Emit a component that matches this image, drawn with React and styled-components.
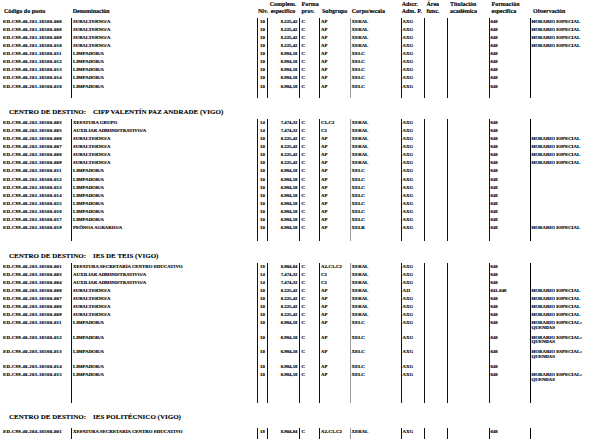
import React from 'react';
import styled, { createGlobalStyle } from 'styled-components';

const GlobalStyle = createGlobalStyle`
  html, body { margin: 0; padding: 0; background: #fff; }
  body {
    font-family: "Liberation Serif", "Times New Roman", serif;
    color: #000;
  }
`;

const COLS = '71px 186px 10px 32px 20px 31px 51px 23px 23px 42px 41px 86px';
const PITCH = 8.1;

const Page = styled.div`
  width: 616px;
  height: 439px;
  overflow: hidden;
  display: flex;
  flex-direction: column;
  background: #fff;
`;

const HeaderGrid = styled.div`
  display: grid;
  grid-template-columns: ${COLS};
  padding-top: 1px;
  font-size: 6px;
  font-weight: 700;
  line-height: 7px;
  -webkit-text-stroke: 0.12px #000;
`;

const HeaderCell = styled.div`
  display: flex;
  flex-direction: column;
  padding-left: ${(p) => p.$pad || 0}px;
  text-align: ${(p) => p.$align || 'left'};
  white-space: nowrap;
`;

const HeaderLine = styled.span`
  display: block;
  height: 7px;
`;

const HeaderRule = styled.div`
  height: 1px;
  margin: 0 4px 0 3px;
  background: #111;
`;

const Section = styled.div`
  display: flex;
  flex-direction: column;
  margin-top: ${(p) => p.$top || 0}px;
`;

const Row = styled.div`
  display: grid;
  grid-template-columns: ${COLS};
  min-height: ${(p) => p.$h || PITCH}px;
  font-size: 4.8px;
  font-weight: 700;
  line-height: 4.8px;
  -webkit-text-stroke: 0.15px #000;
`;

const lineStyles = {
  none: 'border-left: 0;',
  solid: 'border-left: 1px solid #111;',
  gray: 'border-left: 1.5px solid #9c9c9c;',
  heavy: 'border-left: 1.5px solid #000;',
};

const Cell = styled.div`
  box-sizing: border-box;
  ${(p) => lineStyles[p.$line || 'solid']}
  padding-top: 1.75px;
  padding-bottom: ${(p) => (p.$double ? 3.2 : 0)}px;
  padding-left: ${(p) => p.$pad || 0}px;
  padding-right: ${(p) => p.$padR || 0}px;
  text-align: ${(p) => p.$align || 'left'};
  letter-spacing: ${(p) => p.$ls || 0}px;
  white-space: nowrap;
`;

const Heading = styled.div`
  display: flex;
  align-items: center;
  margin: 10.3px 0 ${(p) => p.$after || 2}px 9px;
  height: 9px;
  font-size: 7px;
  line-height: 9px;
  font-weight: 700;
  white-space: nowrap;
  -webkit-text-stroke: 0.1px #000;
`;

const HeadingLabel = styled.span`
  width: 84px;
`;

const colSpec = [
  { line: 'none', pad: 3, ls: 0.3 },
  { line: 'solid', pad: 1 },
  { line: 'solid', align: 'center' },
  { line: 'solid', align: 'right', padR: 1.5 },
  { line: 'solid', pad: 1.5 },
  { line: 'solid', pad: 1 },
  { line: 'gray', pad: 0.5 },
  { line: 'solid', pad: 0.5 },
  { line: 'solid', pad: 0.5 },
  { line: 'solid', pad: 0.5 },
  { line: 'solid', pad: 0.5 },
  { line: 'heavy', pad: 0.5 },
];

const headerSpec = [
  { l2: 'Código do posto', pad: 4 },
  { l2: 'Denominación', pad: 1.7 },
  { l2: 'Niv.', pad: 1 },
  { l1: 'Complem.', l2: 'específico', align: 'center' },
  { l1: 'Forma', l2: 'prov.', pad: 2.5 },
  { l2: 'Subgrupo', pad: 3 },
  { l2: 'Corpo/escala', pad: 1.7 },
  { l1: 'Adscr.', l2: 'Adm. P.', pad: 0.7 },
  { l1: 'Área', l2: 'func.', pad: 2.5 },
  { l1: 'Titulación', l2: 'académica', pad: 3 },
  { l1: 'Formación', l2: 'específica', pad: 2.5 },
  { l2: 'Observación', pad: 3 },
];

const HE = 'HORARIO ESPECIAL';
const HEQ = 'HORARIO ESPECIAL:\nQUENDAS';

const sub = (code, obs = HE, adscr = 'AXG', form = '648') => [
  code, 'SUBALTERNO/A', '10', '8.225,42', 'C', 'AP', 'XERAL', adscr, '', '', form, obs,
];
const limp = (code, obs = '', corpo = 'XELC', denom = 'LIMPADOR/A') => [
  code, denom, '10', '6.984,18', 'C', 'AP', corpo, 'AXG', '', '', '648', obs,
];
const other = (code, denom, niv, comp, grp) => [
  code, denom, niv, comp, 'C', grp, 'XERAL', 'AXG', '', '', '648', '',
];

const P1 = 'ED.C99.40.201.16560.';
const P2 = 'ED.C99.40.202.16560.';
const P3 = 'ED.C99.40.203.16560.';
const P4 = 'ED.C99.40.204.16560.';

const sections = [
  {
    spacer: 7,
    rows: [
      sub(P1 + '006'), sub(P1 + '008'), sub(P1 + '009'), sub(P1 + '010'),
      limp(P1 + '011'), limp(P1 + '012'), limp(P1 + '013'), limp(P1 + '014'), limp(P1 + '016'),
    ],
  },
  {
    heading: 'CIFP VALENTÍN PAZ ANDRADE (VIGO)',
    spacer: 9,
    rows: [
      other(P2 + '003', 'XEFATURA GRUPO', '14', '7.474,32', 'C1-C2'),
      other(P2 + '005', 'AUXILIAR ADMINISTRATIVO/A', '14', '7.474,32', 'C2'),
      sub(P2 + '006'), sub(P2 + '007'), sub(P2 + '008'), sub(P2 + '009'),
      limp(P2 + '011'), limp(P2 + '012'), limp(P2 + '013'), limp(P2 + '014'),
      limp(P2 + '015'), limp(P2 + '016'), limp(P2 + '017'),
      limp(P2 + '019', HE, 'XELR', 'PEÓNOA AGRARIO/A'),
    ],
  },
  {
    heading: 'IES DE TEIS (VIGO)',
    spacer: 17,
    rows: [
      other(P3 + '001', 'XEFATURA SECRETARÍA CENTRO EDUCATIVO', '18', '8.904,84', 'A2-C1-C2'),
      other(P3 + '003', 'AUXILIAR ADMINISTRATIVO/A', '14', '7.474,32', 'C2'),
      other(P3 + '004', 'AUXILIAR ADMINISTRATIVO/A', '14', '7.474,32', 'C2'),
      sub(P3 + '006', HE, 'A11', '641-648'),
      sub(P3 + '007'), sub(P3 + '008'), sub(P3 + '009'),
      limp(P3 + '011', HEQ), limp(P3 + '012', HEQ), limp(P3 + '013', HEQ),
      limp(P3 + '014'), limp(P3 + '015', HEQ),
    ],
  },
  {
    heading: 'IES POLITÉCNICO (VIGO)',
    after: 6,
    spacer: 3,
    rows: [
      other(P4 + '001', 'XEFATURA SECRETARÍA CENTRO EDUCATIVO', '18', '8.904,84', 'A2-C1-C2'),
    ],
  },
];

function CellText({ text }) {
  const parts = text.split('\n');
  return parts.map((t, i) => (
    <React.Fragment key={i}>
      {i > 0 && <br />}
      {t}
    </React.Fragment>
  ));
}

function DataRow({ cells, h }) {
  return (
    <Row $h={h}>
      {colSpec.map((c, i) => {
        const text = cells ? cells[i] : '';
        return (
          <Cell
            key={i}
            $line={c.line}
            $pad={c.pad}
            $padR={c.padR}
            $align={c.align}
            $ls={c.ls}
            $double={text.includes('\n')}
          >
            {cells ? <CellText text={text} /> : null}
          </Cell>
        );
      })}
    </Row>
  );
}

export default function App() {
  return (
    <Page>
      <GlobalStyle />
      <HeaderGrid>
        {headerSpec.map((h, i) => (
          <HeaderCell key={i} $pad={h.pad} $align={h.align}>
            <HeaderLine>{h.l1 || '\u00a0'}</HeaderLine>
            <HeaderLine>{h.l2}</HeaderLine>
          </HeaderCell>
        ))}
      </HeaderGrid>
      <HeaderRule />
      {sections.map((s, si) => (
        <React.Fragment key={si}>
          {s.heading && (
            <Heading $after={s.after}>
              <HeadingLabel>CENTRO DE DESTINO:</HeadingLabel>
              <span>{s.heading}</span>
            </Heading>
          )}
          <Section $top={s.heading ? 0 : 3}>
            {s.rows.map((r, ri) => (
              <DataRow key={ri} cells={r} />
            ))}
            <DataRow h={s.spacer} />
          </Section>
        </React.Fragment>
      ))}
    </Page>
  );
}
